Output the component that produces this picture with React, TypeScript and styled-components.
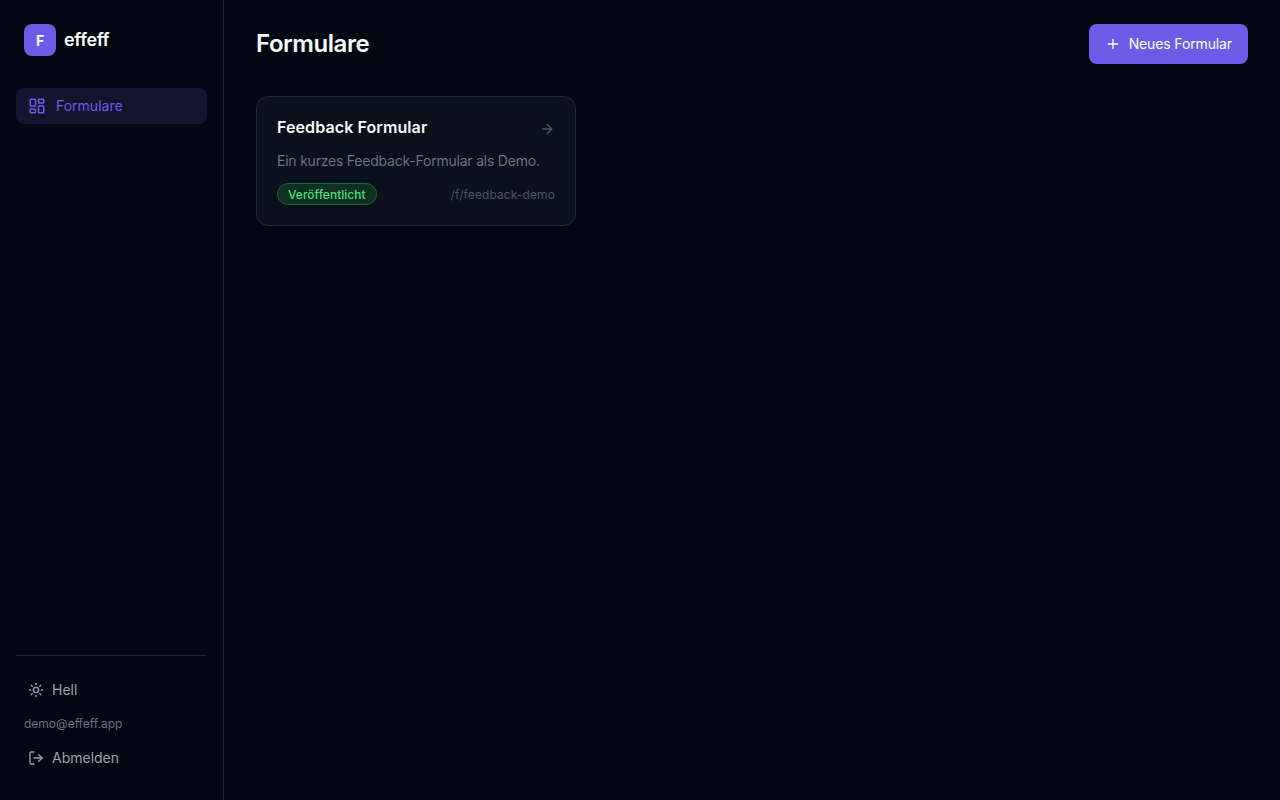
import React from "react";
import styled, { createGlobalStyle } from "styled-components";
import { ArrowRight, LayoutDashboard, LogOut, Plus, Sun } from "lucide-react";

const Global = createGlobalStyle`
  html, body { margin: 0; height: 100%; background: #030712; }
  body { font-family: Inter, "Liberation Sans", sans-serif; color: #f9fafb; }
  * { box-sizing: border-box; }
`;
const Shell = styled.div`display: flex; height: 800px; background: #030712;`;
const Sidebar = styled.aside`
  width: 224px; flex: none; display: flex; flex-direction: column;
  padding: 24px 16px 24px; border-right: 1px solid #1f2937;
`;
const Brand = styled.div`display: flex; align-items: center; gap: 8px; padding: 0 8px; margin-bottom: 32px;`;
const Logo = styled.div`
  width: 32px; height: 32px; border-radius: 8px; background: #6c5ce7; color: #fff;
  display: flex; align-items: center; justify-content: center; font-size: 14px; font-weight: 700;
`;
const BrandName = styled.span`font-size: 18px; font-weight: 600; letter-spacing: -0.35px; color: #f9fafb; margin-bottom: 2px;`;
const Label = styled.span`margin-bottom: 2px;`;
const NavItem = styled.a`
  height: 36px; display: flex; align-items: center; gap: 10px; padding: 0 12px;
  border-radius: 8px; background: #14142f; color: #6c5ce7; font-size: 14px; font-weight: 400;
`;
const Spacer = styled.div`flex: 1;`;
const Footer = styled.div`border-top: 1px solid #1f2937; padding-top: 16px; display: flex; flex-direction: column;`;
const FooterAction = styled.a`
  height: 36px; display: flex; align-items: center; gap: 8px; padding: 0 12px;
  color: #9ca3af; font-size: 14px; font-weight: 400;
`;
const Email = styled.div`padding: 0 8px; font-size: 12px; line-height: 16px; color: #6b7280; height: 32px; display: flex; align-items: center;`;
const Main = styled.main`flex: 1; padding: 24px 32px; min-width: 0;`;
const Header = styled.header`display: flex; align-items: center; justify-content: space-between; margin-bottom: 32px;`;
const Title = styled.h1`margin: 0 0 2px; font-size: 24px; font-weight: 600; letter-spacing: -0.45px; color: #f9fafb;`;
const Primary = styled.button`
  height: 40px; display: flex; align-items: center; gap: 8px; padding: 0 16px; border: 0;
  border-radius: 8px; background: #6c5ce7; color: #fff; font: 400 14px Inter, sans-serif; letter-spacing: -0.13px;
`;
const Grid = styled.div`display: grid; grid-template-columns: repeat(3, 320px); gap: 16px;`;
const Card = styled.article`
  height: 130px; padding: 20px; background: #0a101c; border: 1px solid #1f2937; border-radius: 12px;
  display: flex; flex-direction: column;
`;
const CardTop = styled.div`display: flex; align-items: center; justify-content: space-between; height: 22px; margin-bottom: 12px;`;
const CardTitle = styled.h2`margin: 0 0 2px; font-size: 16px; font-weight: 600; letter-spacing: 0.1px; color: #f9fafb;`;
const Arrow = styled(ArrowRight)`margin-top: 2px;`;
const Desc = styled.p`margin: 0 0 12px; font-size: 14px; line-height: 20px; letter-spacing: -0.22px; color: #6b7280;`;
const CardBottom = styled.div`display: flex; align-items: center; justify-content: space-between;`;
const Badge = styled.span`
  height: 22px; display: flex; align-items: center; padding: 0 10px; border-radius: 999px;
  background: #0f2f23; border: 1px solid #166534; color: #4ade80; font-size: 12px; font-weight: 500;
`;
const Slug = styled.span`font-size: 12px; letter-spacing: 0.1px; color: #4b5563;`;

export default function App() {
  return (
    <Shell>
      <Global />
      <Sidebar>
        <Brand><Logo>F</Logo><BrandName>effeff</BrandName></Brand>
        <NavItem><LayoutDashboard size={18} /><Label>Formulare</Label></NavItem>
        <Spacer />
        <Footer>
          <FooterAction><Sun size={16} /><Label>Hell</Label></FooterAction>
          <Email>demo@effeff.app</Email>
          <FooterAction><LogOut size={16} /><Label>Abmelden</Label></FooterAction>
        </Footer>
      </Sidebar>
      <Main>
        <Header>
          <Title>Formulare</Title>
          <Primary><Plus size={16} /><Label>Neues Formular</Label></Primary>
        </Header>
        <Grid>
          <Card>
            <CardTop>
              <CardTitle>Feedback Formular</CardTitle>
              <Arrow size={16} color="#4b5563" />
            </CardTop>
            <Desc>Ein kurzes Feedback-Formular als Demo.</Desc>
            <CardBottom>
              <Badge>Veröffentlicht</Badge>
              <Slug>/f/feedback-demo</Slug>
            </CardBottom>
          </Card>
        </Grid>
      </Main>
    </Shell>
  );
}
